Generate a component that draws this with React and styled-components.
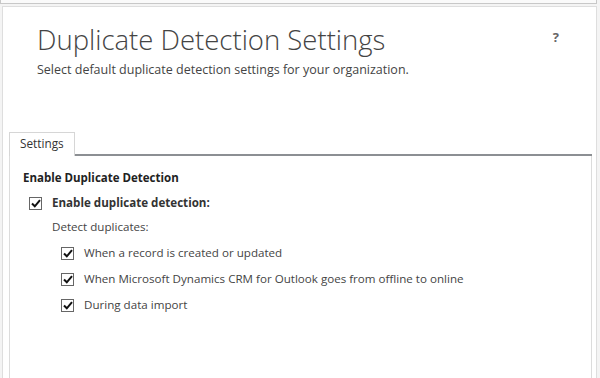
import React from 'react'
import styled, { createGlobalStyle } from 'styled-components'

const Global = createGlobalStyle`
  html, body { margin: 0; padding: 0; background: #fff; }
  body { font-family: "Segoe UI", "Open Sans", "Noto Sans", sans-serif; color: #444; overflow: hidden; }
`

const Page = styled.div`
  width: 600px;
  height: 378px;
  display: flex;
  flex-direction: column;
  background: #f4f4f4;
`

const TopStrip = styled.div`
  height: 3px;
  margin: 0 3px 2px 0;
  background: #fafafa;
  border: 1px solid #c8c8c8;
  border-top: none;
`

const Panel = styled.div`
  flex: 1;
  margin: 0 3px 0 2px;
  background: #fff;
  border: 1px solid #dedede;
  border-bottom: none;
  display: flex;
  flex-direction: column;
`

const Header = styled.div`
  display: flex;
  justify-content: space-between;
  align-items: flex-start;
  padding: 15px 37px 0 34px;
`

const Title = styled.h1`
  margin: 0;
  font-weight: 300;
  font-size: 27.5px;
  line-height: 36px;
  color: #444;
`

const Subtitle = styled.div`
  font-size: 12.5px;
  line-height: 18px;
  margin-top: 3px;
`

const Help = styled.span`
  font-weight: 700;
  font-size: 13px;
  color: #666;
  margin-top: 6px;
`

const TabStrip = styled.div`
  display: flex;
  margin: 53px 4px 0 6px;
  border-bottom: 2px solid #8c8f93;
`

const Tab = styled.div`
  padding: 2px 10px 5px 10px;
  font-size: 11.8px;
  line-height: 16px;
  color: #333;
  background: #fff;
  border: 1px solid #d6d6d6;
  border-bottom: none;
  margin-bottom: -2px;
`

const TabBody = styled.div`
  flex: 1;
  margin: 0 4px 0 6px;
  border-left: 1px solid #dcdcdc;
  border-right: 1px solid #dcdcdc;
  padding: 14px 13px 0 13px;
`

const Section = styled.div`
  font-weight: 700;
  font-size: 11.5px;
  line-height: 16px;
  color: #222;
`

const Row = styled.label`
  display: flex;
  align-items: center;
  gap: 10px;
  margin-left: ${p => p.$indent}px;
  margin-top: ${p => p.$top}px;
  font-size: 11.6px;
  line-height: 16px;
  font-weight: ${p => (p.$bold ? 700 : 400)};
  color: ${p => (p.$bold ? '#333' : '#444')};
`

const Box = styled.span`
  width: 11px;
  height: 11px;
  border: 1px solid #666;
  display: flex;
  align-items: center;
  justify-content: center;
  background: #fff;
  flex: none;
`

const Note = styled.div`
  font-size: 11.6px;
  line-height: 16px;
  margin: 8px 0 0 29px;
`

const Check = () => (
  <Box>
    <svg width="10" height="9" viewBox="0 0 10 9">
      <path d="M1 4.5 L3.8 7.3 L9 1.2" fill="none" stroke="#111" strokeWidth="2" />
    </svg>
  </Box>
)

export default function App() {
  return (
    <Page>
      <Global />
      <TopStrip />
      <Panel>
        <Header>
          <div>
            <Title>Duplicate Detection Settings</Title>
            <Subtitle>Select default duplicate detection settings for your organization.</Subtitle>
          </div>
          <Help>?</Help>
        </Header>
        <TabStrip>
          <Tab>Settings</Tab>
        </TabStrip>
        <TabBody>
          <Section>Enable Duplicate Detection</Section>
          <Row $indent={6} $top={9} $bold><Check />Enable duplicate detection:</Row>
          <Note>Detect duplicates:</Note>
          <Row $indent={38} $top={10}><Check />When a record is created or updated</Row>
          <Row $indent={38} $top={10}><Check />When Microsoft Dynamics CRM for Outlook goes from offline to online</Row>
          <Row $indent={38} $top={10}><Check />During data import</Row>
        </TabBody>
      </Panel>
    </Page>
  )
}
